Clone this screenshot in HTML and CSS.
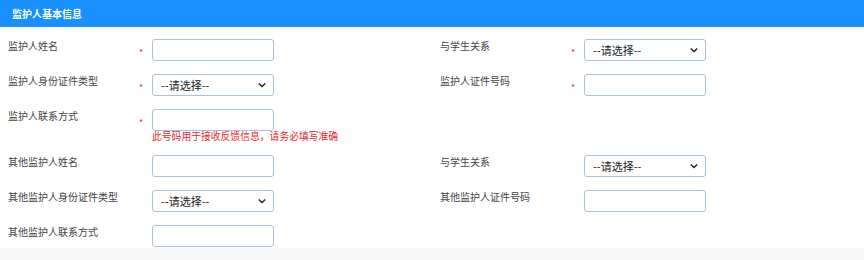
FILE: index.html
```html
<!DOCTYPE html>
<html lang="zh">
<head>
<meta charset="utf-8">
<link rel="stylesheet" href="styles.css">
</head>
<body>
<div class="panel">
  <div class="panel-head">监护人基本信息</div>
  <div class="form">
    <div class="field">
      <div class="label">监护人姓名</div>
      <div class="star">*</div>
      <div class="control"><input class="input" type="text"></div>
    </div>
    <div class="field">
      <div class="label">与学生关系</div>
      <div class="star">*</div>
      <div class="control"><div class="select">--请选择--<svg class="chev" viewBox="0 0 10 6"><path d="M1 1l4 4 4-4" /></svg></div></div>
    </div>
    <div class="field">
      <div class="label">监护人身份证件类型</div>
      <div class="star">*</div>
      <div class="control"><div class="select">--请选择--<svg class="chev" viewBox="0 0 10 6"><path d="M1 1l4 4 4-4" /></svg></div></div>
    </div>
    <div class="field">
      <div class="label">监护人证件号码</div>
      <div class="star">*</div>
      <div class="control"><input class="input" type="text"></div>
    </div>
    <div class="field">
      <div class="label">监护人联系方式</div>
      <div class="star">*</div>
      <div class="control"><input class="input" type="text"><div class="hint">此号码用于接收反馈信息，请务必填写准确</div></div>
    </div>
    <div class="field"></div>
    <div class="field">
      <div class="label">其他监护人姓名</div>
      <div class="star"></div>
      <div class="control"><input class="input" type="text"></div>
    </div>
    <div class="field">
      <div class="label">与学生关系</div>
      <div class="star"></div>
      <div class="control"><div class="select">--请选择--<svg class="chev" viewBox="0 0 10 6"><path d="M1 1l4 4 4-4" /></svg></div></div>
    </div>
    <div class="field">
      <div class="label">其他监护人身份证件类型</div>
      <div class="star"></div>
      <div class="control"><div class="select">--请选择--<svg class="chev" viewBox="0 0 10 6"><path d="M1 1l4 4 4-4" /></svg></div></div>
    </div>
    <div class="field">
      <div class="label">其他监护人证件号码</div>
      <div class="star"></div>
      <div class="control"><input class="input" type="text"></div>
    </div>
    <div class="field last">
      <div class="label">其他监护人联系方式</div>
      <div class="star"></div>
      <div class="control"><input class="input" type="text"></div>
    </div>
    <div class="field last"></div>
  </div>
</div>
</body>
</html>
```
FILE: styles.css
```css
html, body {
  margin: 0;
  padding: 0;
  background: #f9f9f9;
  font-family: "Noto Sans CJK SC", "Microsoft YaHei", sans-serif;
}
.panel {
  background: #fff;
  width: 864px;
}
.panel-head {
  height: 27px;
  background: #1890ff;
  color: #fff;
  font-size: 10px;
  font-weight: bold;
  line-height: 27px;
  padding-left: 12px;
}
.form {
  display: grid;
  grid-template-columns: 432px 432px;
  padding-top: 12px;
}
.field {
  display: flex;
  align-items: flex-start;
  padding-left: 8px;
  padding-bottom: 13px;
}
.field.last {
  padding-bottom: 1px;
}
.label {
  width: 130px;
  font-size: 10px;
  line-height: 12px;
  color: #444;
  padding-top: 1px;
}
.star {
  width: 14px;
  color: #e53935;
  font-size: 9px;
  line-height: 22px;
  padding-top: 3px;
  box-sizing: border-box;
  padding-left: 1px;
  height: 22px;
}
.control {
  display: flex;
  flex-direction: column;
}
.input {
  width: 122px;
  height: 22px;
  box-sizing: border-box;
  margin: 0;
  border: 1px solid #a8c2dc;
  border-radius: 3px;
  background: #fff;
  outline: none;
}
.select {
  width: 122px;
  height: 22px;
  box-sizing: border-box;
  border: 1px solid #a8c2dc;
  border-radius: 3px;
  background: #fff;
  font-size: 11px;
  color: #222;
  line-height: 20px;
  padding-left: 8px;
  display: flex;
  align-items: center;
  justify-content: space-between;
  padding-right: 7px;
}
.chev {
  width: 8px;
  height: 6px;
  fill: none;
  stroke: #222;
  stroke-width: 1.8;
}
.hint {
  color: #e8262b;
  font-size: 9.8px;
  line-height: 11px;
  white-space: nowrap;
}
```
